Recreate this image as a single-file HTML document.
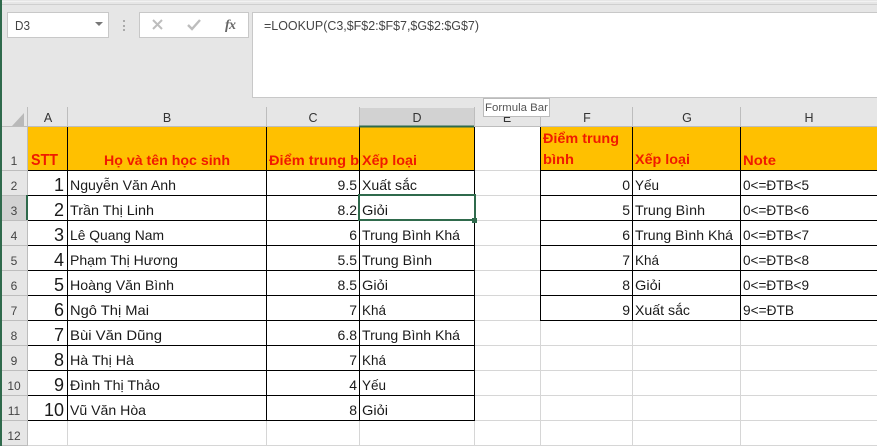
<!DOCTYPE html>
<html><head><meta charset="utf-8"><title>Excel</title>
<style>
html,body{margin:0;padding:0;background:#fff}
svg{display:block}
text{font-family:"Liberation Sans",sans-serif;white-space:pre}
.c{font-size:14px;fill:#1a1a1a}
.h{font-size:14px;font-weight:bold;fill:#f01a00}
.n{font-size:14px;fill:#1a1a1a;text-anchor:end}
.s{font-size:18px;fill:#1a1a1a;text-anchor:end}
.r{font-size:12px;fill:#444;text-anchor:middle}
.l{font-size:12.5px;fill:#333;text-anchor:middle}
</style></head><body>
<svg width="877" height="446" viewBox="0 0 877 446" xmlns="http://www.w3.org/2000/svg" shape-rendering="crispEdges">
<rect width="877" height="446" fill="#fff"/>
<rect width="877" height="127" fill="#e6e6e6"/>
<rect width="877" height="1" y="1" fill="#f2f2f2"/>
<rect width="877" height="1" y="4" fill="#cfcfcf"/>
<rect x="0" y="127" width="28" height="319" fill="#e6e6e6"/>
<rect x="0" y="0" width="2" height="446" fill="#2f6a4c"/>
<rect x="7.5" y="12.5" width="101" height="25" fill="#fff" stroke="#c8c8c8"/>
<text x="15" y="30" font-size="13" fill="#444" textLength="15" lengthAdjust="spacingAndGlyphs">D3</text>
<path d="M95 22h8l-4 4z" fill="#777" shape-rendering="auto"/>
<rect x="123" y="20" width="2" height="2" fill="#aaa"/><rect x="123" y="25" width="2" height="2" fill="#aaa"/><rect x="123" y="29" width="2" height="2" fill="#aaa"/>
<rect x="139.5" y="12.5" width="109" height="25" fill="#fff" stroke="#c8c8c8"/>
<path d="M153 20l9 9M162 20l-9 9" stroke="#bdbdbd" stroke-width="2" fill="none" shape-rendering="auto"/>
<path d="M188 25l4 4 8-9" stroke="#bdbdbd" stroke-width="2.4" fill="none" shape-rendering="auto"/>
<text x="225" y="29" font-size="14" font-style="italic" font-weight="bold" fill="#666" style="font-family:'Liberation Serif',serif" textLength="11">fx</text>
<rect x="252.5" y="12.5" width="630" height="85" fill="#fff" stroke="#c8c8c8"/>
<text x="264" y="30" font-size="13" fill="#444" textLength="215" lengthAdjust="spacingAndGlyphs">=LOOKUP(C3,$F$2:$F$7,$G$2:$G$7)</text>

<path d="M12 126h12v-13z" fill="#b9b9b9" shape-rendering="auto"/>
<rect x="359" y="108" width="115" height="19" fill="#d2d2d2"/>
<rect x="0" y="195" width="28" height="25" fill="#d2d2d2"/>
<rect x="0" y="0" width="2" height="446" fill="#2f6a4c"/>
<g fill="#bdbdbd">
<rect x="27" y="107" width="1" height="20"/><rect x="67" y="107" width="1" height="20"/><rect x="266" y="107" width="1" height="20"/><rect x="359" y="107" width="1" height="20"/><rect x="474" y="107" width="1" height="20"/><rect x="540" y="107" width="1" height="20"/><rect x="632" y="107" width="1" height="20"/><rect x="740" y="107" width="1" height="20"/>
<rect x="27" y="127" width="1" height="319"/>
<rect x="2" y="170" width="25" height="1"/><rect x="2" y="195" width="25" height="1"/><rect x="2" y="220" width="25" height="1"/><rect x="2" y="245" width="25" height="1"/><rect x="2" y="270" width="25" height="1"/><rect x="2" y="295" width="25" height="1"/><rect x="2" y="320" width="25" height="1"/><rect x="2" y="345" width="25" height="1"/><rect x="2" y="370" width="25" height="1"/><rect x="2" y="395" width="25" height="1"/><rect x="2" y="420" width="25" height="1"/><rect x="2" y="445" width="25" height="1"/>
</g>
<rect x="2" y="126" width="875" height="1" fill="#bdbdbd"/>
<text class="l" x="48" y="122">A</text><text class="l" x="167" y="122">B</text><text class="l" x="313" y="122">C</text><text class="l" x="417" y="122">D</text><text class="l" x="507" y="122">E</text><text class="l" x="587" y="122">F</text><text class="l" x="687" y="122">G</text><text class="l" x="809" y="122">H</text>
<text class="r" x="14" y="165">1</text><text class="r" x="14" y="190">2</text><text class="r" x="14" y="215">3</text><text class="r" x="14" y="240">4</text><text class="r" x="14" y="265">5</text><text class="r" x="14" y="290">6</text><text class="r" x="14" y="315">7</text><text class="r" x="14" y="340">8</text><text class="r" x="14" y="365">9</text><text class="r" x="14" y="390">10</text><text class="r" x="14" y="415">11</text><text class="r" x="14" y="440">12</text>

<rect x="28" y="127" width="447" height="43" fill="#ffc000"/>
<rect x="541" y="127" width="336" height="43" fill="#ffc000"/>
<rect x="474" y="127" width="66" height="43" fill="#fff"/>

<g fill="#d6d6d6">
<rect x="474" y="170" width="66" height="1"/><rect x="474" y="195" width="66" height="1"/><rect x="474" y="220" width="66" height="1"/><rect x="474" y="245" width="66" height="1"/><rect x="474" y="270" width="66" height="1"/><rect x="474" y="295" width="66" height="1"/><rect x="474" y="320" width="403" height="1"/>
<rect x="474" y="345" width="403" height="1"/><rect x="474" y="370" width="403" height="1"/><rect x="474" y="395" width="403" height="1"/><rect x="474" y="420" width="403" height="1"/><rect x="28" y="445" width="849" height="1"/>
<rect x="540" y="320" width="1" height="126"/><rect x="632" y="320" width="1" height="126"/><rect x="740" y="320" width="1" height="126"/>
<rect x="474" y="420" width="1" height="26"/><rect x="67" y="420" width="1" height="26"/><rect x="266" y="420" width="1" height="26"/><rect x="359" y="420" width="1" height="26"/>
</g>

<g fill="#000">
<rect x="28" y="170" width="447" height="1"/><rect x="28" y="195" width="447" height="1"/><rect x="28" y="220" width="447" height="1"/><rect x="28" y="245" width="447" height="1"/><rect x="28" y="270" width="447" height="1"/><rect x="28" y="295" width="447" height="1"/><rect x="28" y="320" width="447" height="1"/><rect x="28" y="345" width="447" height="1"/><rect x="28" y="370" width="447" height="1"/><rect x="28" y="395" width="447" height="1"/><rect x="28" y="420" width="447" height="1"/>
<rect x="67" y="127" width="1" height="294"/><rect x="266" y="127" width="1" height="294"/><rect x="359" y="127" width="1" height="294"/><rect x="474" y="127" width="1" height="294"/>
<rect x="540" y="170" width="337" height="1"/><rect x="540" y="195" width="337" height="1"/><rect x="540" y="220" width="337" height="1"/><rect x="540" y="245" width="337" height="1"/><rect x="540" y="270" width="337" height="1"/><rect x="540" y="295" width="337" height="1"/><rect x="540" y="320" width="337" height="1"/>
<rect x="540" y="127" width="1" height="194"/><rect x="632" y="127" width="1" height="194"/><rect x="740" y="127" width="1" height="194"/>
</g>

<text class="h" x="31" y="165" font-size="16" style="font-size:16px" textLength="27" lengthAdjust="spacingAndGlyphs">STT</text>
<text class="h" x="104" y="165" textLength="126" lengthAdjust="spacingAndGlyphs">Họ và tên học sinh</text>
<text class="h" x="269" y="165" textLength="90" lengthAdjust="spacingAndGlyphs">Điểm trung b</text>
<text class="h" x="362" y="165" textLength="55" lengthAdjust="spacingAndGlyphs">Xếp loại</text>
<text class="h" x="543" y="143" textLength="76" lengthAdjust="spacingAndGlyphs">Điểm trung</text>
<text class="h" x="543" y="164" textLength="31" lengthAdjust="spacingAndGlyphs">bình</text>
<text class="h" x="635" y="164" textLength="55" lengthAdjust="spacingAndGlyphs">Xếp loại</text>
<text class="h" x="743" y="165" textLength="33" lengthAdjust="spacingAndGlyphs">Note</text>

<text class="s" x="64" y="191">1</text><text class="s" x="64" y="216">2</text><text class="s" x="64" y="241">3</text><text class="s" x="64" y="266">4</text><text class="s" x="64" y="291">5</text><text class="s" x="64" y="316">6</text><text class="s" x="64" y="341">7</text><text class="s" x="64" y="366">8</text><text class="s" x="64" y="391">9</text><text class="s" x="64" y="416">10</text>

<text class="c" x="70" y="190" textLength="106" lengthAdjust="spacingAndGlyphs">Nguyễn Văn Anh</text>
<text class="c" x="70" y="215" textLength="84" lengthAdjust="spacingAndGlyphs">Trần Thị Linh</text>
<text class="c" x="70" y="240" textLength="94" lengthAdjust="spacingAndGlyphs">Lê Quang Nam</text>
<text class="c" x="70" y="265" textLength="108" lengthAdjust="spacingAndGlyphs">Phạm Thị Hương</text>
<text class="c" x="70" y="290" textLength="104" lengthAdjust="spacingAndGlyphs">Hoàng Văn Bình</text>
<text class="c" x="70" y="315" textLength="79" lengthAdjust="spacingAndGlyphs">Ngô Thị Mai</text>
<text class="c" x="70" y="340" textLength="92" lengthAdjust="spacingAndGlyphs">Bùi Văn Dũng</text>
<text class="c" x="70" y="365" textLength="64" lengthAdjust="spacingAndGlyphs">Hà Thị Hà</text>
<text class="c" x="70" y="390" textLength="90" lengthAdjust="spacingAndGlyphs">Đình Thị Thảo</text>
<text class="c" x="70" y="415" textLength="76" lengthAdjust="spacingAndGlyphs">Vũ Văn Hòa</text>

<text class="n" x="357" y="190">9.5</text><text class="n" x="357" y="215">8.2</text><text class="n" x="357" y="240">6</text><text class="n" x="357" y="265">5.5</text><text class="n" x="357" y="290">8.5</text><text class="n" x="357" y="315">7</text><text class="n" x="357" y="340">6.8</text><text class="n" x="357" y="365">7</text><text class="n" x="357" y="390">4</text><text class="n" x="357" y="415">8</text>

<text class="c" x="362" y="190" textLength="55" lengthAdjust="spacingAndGlyphs">Xuất sắc</text>
<text class="c" x="362" y="215" textLength="26" lengthAdjust="spacingAndGlyphs">Giỏi</text>
<text class="c" x="362" y="240" textLength="98" lengthAdjust="spacingAndGlyphs">Trung Bình Khá</text>
<text class="c" x="362" y="265" textLength="70" lengthAdjust="spacingAndGlyphs">Trung Bình</text>
<text class="c" x="362" y="290" textLength="26" lengthAdjust="spacingAndGlyphs">Giỏi</text>
<text class="c" x="362" y="315" textLength="24" lengthAdjust="spacingAndGlyphs">Khá</text>
<text class="c" x="362" y="340" textLength="98" lengthAdjust="spacingAndGlyphs">Trung Bình Khá</text>
<text class="c" x="362" y="365" textLength="24" lengthAdjust="spacingAndGlyphs">Khá</text>
<text class="c" x="362" y="390" textLength="24" lengthAdjust="spacingAndGlyphs">Yếu</text>
<text class="c" x="362" y="415" textLength="26" lengthAdjust="spacingAndGlyphs">Giỏi</text>

<text class="n" x="630" y="190">0</text><text class="n" x="630" y="215">5</text><text class="n" x="630" y="240">6</text><text class="n" x="630" y="265">7</text><text class="n" x="630" y="290">8</text><text class="n" x="630" y="315">9</text>

<text class="c" x="635" y="190" textLength="24" lengthAdjust="spacingAndGlyphs">Yếu</text>
<text class="c" x="635" y="215" textLength="70" lengthAdjust="spacingAndGlyphs">Trung Bình</text>
<text class="c" x="635" y="240" textLength="98" lengthAdjust="spacingAndGlyphs">Trung Bình Khá</text>
<text class="c" x="635" y="265" textLength="24" lengthAdjust="spacingAndGlyphs">Khá</text>
<text class="c" x="635" y="290" textLength="26" lengthAdjust="spacingAndGlyphs">Giỏi</text>
<text class="c" x="635" y="315" textLength="55" lengthAdjust="spacingAndGlyphs">Xuất sắc</text>

<text class="c" x="743" y="190" textLength="66" lengthAdjust="spacingAndGlyphs">0&lt;=ĐTB&lt;5</text>
<text class="c" x="743" y="215" textLength="66" lengthAdjust="spacingAndGlyphs">0&lt;=ĐTB&lt;6</text>
<text class="c" x="743" y="240" textLength="66" lengthAdjust="spacingAndGlyphs">0&lt;=ĐTB&lt;7</text>
<text class="c" x="743" y="265" textLength="66" lengthAdjust="spacingAndGlyphs">0&lt;=ĐTB&lt;8</text>
<text class="c" x="743" y="290" textLength="66" lengthAdjust="spacingAndGlyphs">0&lt;=ĐTB&lt;9</text>
<text class="c" x="743" y="315" textLength="51" lengthAdjust="spacingAndGlyphs">9&lt;=ĐTB</text>

<rect x="359" y="125.5" width="115" height="2" fill="#2f6a4c"/>
<rect x="26" y="195" width="2" height="25" fill="#2f6a4c"/>
<rect x="359" y="195" width="116" height="25" fill="none" stroke="#2f6a4c" stroke-width="2"/>
<rect x="472" y="218" width="5" height="5" fill="#2f6a4c" stroke="#fff" stroke-width="0"/>

<rect x="483.5" y="98.5" width="66" height="18" fill="#fff" stroke="#bbb"/>
<text x="485" y="111" font-size="11" fill="#555" textLength="63" lengthAdjust="spacingAndGlyphs">Formula Bar</text>
</svg>
</body></html>
